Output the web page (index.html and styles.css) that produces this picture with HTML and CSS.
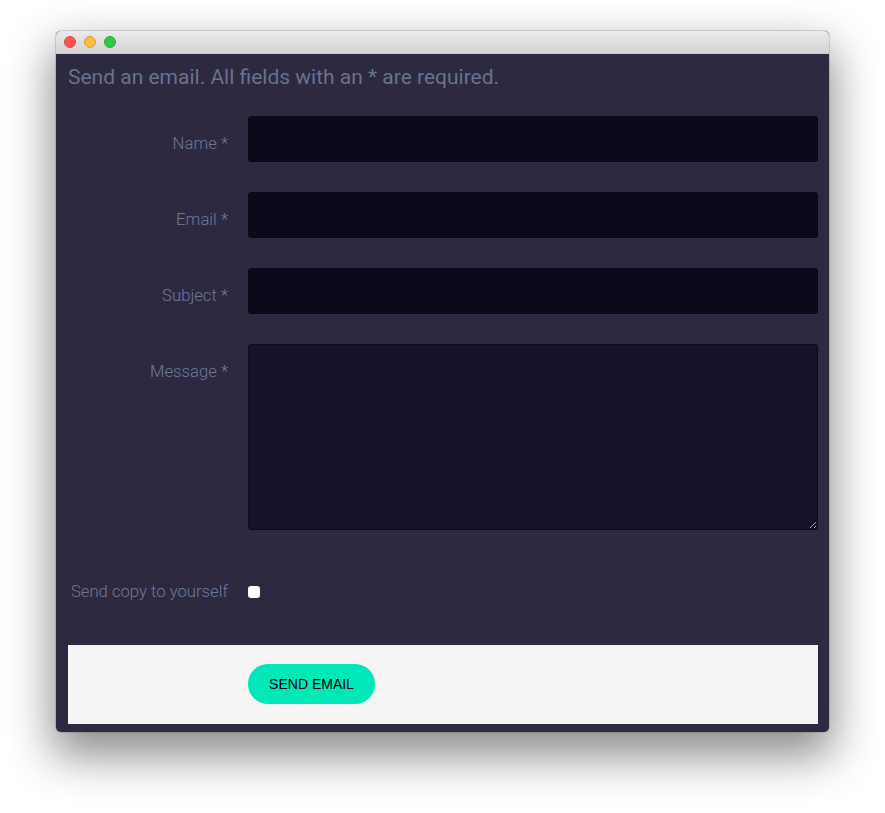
FILE: index.html
```html
<!DOCTYPE html>
<html>
<head>
<meta charset="utf-8">
<link rel="stylesheet" href="styles.css">
</head>
<body>
<div class="window">
  <div class="titlebar">
    <span class="light red"></span>
    <span class="light yellow"></span>
    <span class="light green"></span>
  </div>
  <div class="content">
    <h1 class="heading">Send an email. All fields with an * are required.</h1>
    <form class="form">
      <div class="row">
        <label class="label">Name *</label>
        <input class="field" type="text">
      </div>
      <div class="row">
        <label class="label">Email *</label>
        <input class="field" type="text">
      </div>
      <div class="row">
        <label class="label">Subject *</label>
        <input class="field" type="text">
      </div>
      <div class="row">
        <label class="label">Message *</label>
        <textarea class="field area"></textarea>
      </div>
      <div class="row check-row">
        <label class="label">Send copy to yourself</label>
        <span class="checkbox"></span>
      </div>
      <div class="footer">
        <button class="send" type="button">SEND EMAIL</button>
      </div>
    </form>
  </div>
</div>
</body>
</html>
```
FILE: styles.css
```css
html, body {
  margin: 0;
  padding: 0;
  background: #ffffff;
}
body {
  font-family: Roboto, "Liberation Sans", sans-serif;
  min-height: 813px;
  padding-top: 31px;
  box-sizing: border-box;
  overflow: hidden;
}
.window {
  margin: 0 0 0 56px;
  width: 773px;
  height: 701px;
  background: #2d2941;
  border-radius: 5px;
  box-shadow: 0 20px 45px 4px rgba(0,0,0,0.45), 0 0 0 1px rgba(0,0,0,0.12);
  overflow: hidden;
  box-sizing: border-box;
}
.titlebar {
  height: 23px;
  background: linear-gradient(#ebe9eb, #d5d3d5);
  border-bottom: 1px solid #c9c7c9;
  box-sizing: border-box;
  display: flex;
  align-items: center;
  padding-left: 8px;
  gap: 8px;
}
.light {
  width: 12px;
  height: 12px;
  border-radius: 50%;
  box-sizing: border-box;
}
.red { background: #fc5753; border: 1px solid #df4744; }
.yellow { background: #fdbc40; border: 1px solid #de9f34; }
.green { background: #33c748; border: 1px solid #27aa35; }
.content {
  padding: 0 11px 0 12px;
}
.heading {
  margin: 11px 0 0 0;
  font-size: 21px;
  line-height: 24px;
  font-weight: 400;
  color: #66728f;
}
.form {
  margin-top: 27px;
  display: flex;
  flex-direction: column;
}
.row {
  display: flex;
  gap: 20px;
  margin-bottom: 30px;
}
.label {
  width: 160px;
  flex: none;
  text-align: right;
  font-size: 16.7px;
  line-height: 20px;
  font-weight: 300;
  color: #6c7898;
  padding-top: 18px;
}
.field {
  flex: 1;
  height: 46px;
  box-sizing: border-box;
  background: #0c0a1a;
  border: 1px solid #0a0816;
  border-radius: 3px;
  margin: 0;
  outline: none;
}
.area {
  height: 186px;
  background: #15122b;
  border-color: #0e0c1e;
}
.check-row {
  margin-top: 12px;
  margin-bottom: 0;
  height: 40px;
  align-items: center;
}
.check-row .label {
  padding-top: 0;
}
.checkbox {
  width: 12px;
  height: 12px;
  background: #ffffff;
  border-radius: 3px;
}
.footer {
  margin-top: 33px;
  height: 79px;
  background: #f4f4f4;
  display: flex;
  align-items: center;
  padding-left: 180px;
  padding-bottom: 1px;
  box-sizing: border-box;
}
.send {
  width: 127px;
  height: 40px;
  border: none;
  border-radius: 20px;
  background: #00e8b8;
  color: #000000;
  font-family: "Liberation Sans", Arial, sans-serif;
  font-size: 14px;
  padding: 0;
}
```
